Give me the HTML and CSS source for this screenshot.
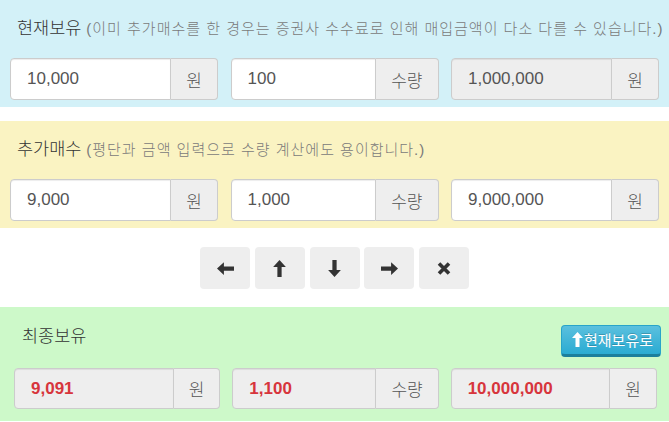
FILE: index.html
```html
<!DOCTYPE html>
<html lang="ko">
<head>
    <meta charset="UTF-8">
    <meta name="viewport" content="width=device-width, initial-scale=1.0">
    <title>물타기 계산기</title>
    <link rel="stylesheet" href="styles.css">
</head>
<body>
<div class="panel panel-current">
    <div class="panel-title">현재보유 <small>(이미 추가매수를 한 경우는 증권사 수수료로 인해 매입금액이 다소 다를 수 있습니다.)</small></div>
    <div class="row">
        <div class="input-group">
            <input type="text" id="curPrice" value="10,000">
            <span class="addon">원</span>
        </div>
        <div class="input-group">
            <input type="text" id="curQty" value="100">
            <span class="addon">수량</span>
        </div>
        <div class="input-group">
            <input type="text" id="curTotal" value="1,000,000" readonly>
            <span class="addon">원</span>
        </div>
    </div>
</div>

<div class="panel panel-add">
    <div class="panel-title">추가매수 <small>(평단과 금액 입력으로 수량 계산에도 용이합니다.)</small></div>
    <div class="row">
        <div class="input-group">
            <input type="text" id="addPrice" value="9,000">
            <span class="addon">원</span>
        </div>
        <div class="input-group">
            <input type="text" id="addQty" value="1,000">
            <span class="addon">수량</span>
        </div>
        <div class="input-group">
            <input type="text" id="addTotal" value="9,000,000">
            <span class="addon">원</span>
        </div>
    </div>
</div>

<div class="tools">
    <button class="tool" title="왼쪽">
        <svg width="17" height="13" viewBox="0 0 16 12"><path d="M0 6 L6.5 0 V4 H16 V8 H6.5 V12 Z"/></svg>
    </button>
    <button class="tool" title="위">
        <svg width="13" height="17" viewBox="0 0 12 16"><path d="M6 0 L12 6.5 H8 V16 H4 V6.5 H0 Z"/></svg>
    </button>
    <button class="tool" title="아래">
        <svg width="13" height="17" viewBox="0 0 12 16"><path d="M6 16 L12 9.5 H8 V0 H4 V9.5 H0 Z"/></svg>
    </button>
    <button class="tool" title="오른쪽">
        <svg width="17" height="13" viewBox="0 0 16 12"><path d="M16 6 L9.5 0 V4 H0 V8 H9.5 V12 Z"/></svg>
    </button>
    <button class="tool" title="초기화">
        <svg width="14" height="13" viewBox="0 0 13 13"><path d="M1.5 1.5 L11.5 11.5 M11.5 1.5 L1.5 11.5" stroke="#333" stroke-width="3.6"/></svg>
    </button>
</div>

<div class="panel panel-result">
    <div class="result-head">
        <div class="panel-title">최종보유</div>
        <button class="btn-info">
            <svg width="11" height="15" viewBox="0 0 11 15"><path d="M5.5 0 L11 6 H7.5 V15 H3.5 V6 H0 Z" fill="#fff"/></svg>현재보유로
        </button>
    </div>
    <div class="row">
        <div class="input-group">
            <input type="text" class="result" value="9,091" readonly>
            <span class="addon">원</span>
        </div>
        <div class="input-group">
            <input type="text" class="result" value="1,100" readonly>
            <span class="addon">수량</span>
        </div>
        <div class="input-group">
            <input type="text" class="result" value="10,000,000" readonly>
            <span class="addon">원</span>
        </div>
    </div>
</div>
</body>
</html>
```

FILE: styles.css
```css
body {
    margin: 0;
    font-family: "Liberation Sans", "Noto Sans CJK KR", sans-serif;
    color: #333;
    background-color: #fff;
}

.panel {
    padding: 13px 10px 7px;
}

.panel-current {
    background-color: #d3f1f8;
}

.panel-add {
    margin-top: 14px;
    background-color: #faf3c2;
}

.panel-result {
    background-color: #cdf9c9;
    padding: 18px 12px 12px 14px;
}

.panel-title {
    padding-left: 7px;
    font-size: 17.5px;
    font-weight: 300;
    line-height: 30px;
    height: 30px;
    margin-bottom: 15px;
    white-space: nowrap;
}

.panel-title small {
    font-size: 15px;
    color: #7a7a7a;
    letter-spacing: 1px;
}

.row {
    display: grid;
    grid-template-columns: repeat(3, minmax(0, 1fr));
    column-gap: 12.5px;
}

.panel-result .row {
    column-gap: 12px;
}

.input-group {
    display: flex;
    min-width: 0;
    height: 42px;
}

.panel-result .input-group {
    height: 41px;
}

.input-group input {
    flex: 1;
    width: 0;
    min-width: 0;
    box-sizing: border-box;
    height: 100%;
    margin: 0;
    padding: 0 16px;
    font-family: "Liberation Sans", "Noto Sans CJK KR", sans-serif;
    font-size: 17px;
    color: #555;
    background-color: #fff;
    border: 1px solid #ccc;
    border-radius: 4px 0 0 4px;
    box-shadow: inset 0 1px 1px rgba(0, 0, 0, 0.075);
    outline: none;
}

.input-group input[readonly] {
    background-color: #eee;
}

.input-group input.result {
    color: #d7353c;
    font-weight: bold;
}

.addon {
    display: flex;
    align-items: center;
    padding: 0 15px;
    font-size: 17px;
    font-weight: 300;
    color: #555;
    background-color: #eee;
    border: 1px solid #ccc;
    border-left: none;
    border-radius: 0 4px 4px 0;
}

.tools {
    display: flex;
    justify-content: center;
    gap: 4.75px;
    padding: 19px 0 18px;
}

.tool {
    width: 50px;
    height: 42px;
    padding: 0;
    display: flex;
    align-items: center;
    justify-content: center;
    background-color: #eee;
    border: none;
    border-radius: 4px;
    cursor: pointer;
}

.tool svg {
    fill: #333;
}

.result-head {
    display: flex;
    justify-content: space-between;
    align-items: flex-start;
    margin-right: -4px;
    margin-bottom: 11px;
}

.result-head .panel-title {
    line-height: 22px;
    height: 22px;
    margin: 0;
    padding-left: 8px;
}

.btn-info {
    display: flex;
    align-items: center;
    gap: 1px;
    height: 32px;
    padding: 0 7px 2px 10px;
    font-family: "Liberation Sans", "Noto Sans CJK KR", sans-serif;
    font-size: 15px;
    color: #fff;
    text-shadow: 0 -1px 0 rgba(0, 0, 0, 0.2);
    background-image: linear-gradient(to bottom, #5bc0de 0, #2aabd2 100%);
    border: 1px solid #28a4c9;
    border-bottom: 3px solid #1b7f9c;
    border-radius: 4px;
    cursor: pointer;
}
```
